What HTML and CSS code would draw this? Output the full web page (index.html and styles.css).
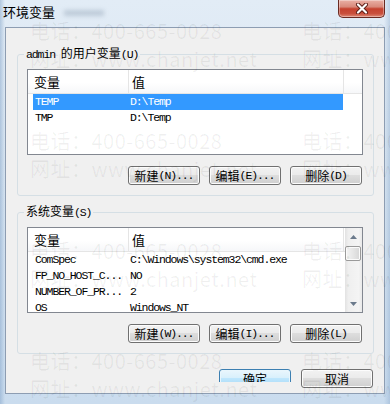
FILE: index.html
```html
<!DOCTYPE html>
<html lang="zh-CN">
<head>
<meta charset="utf-8">
<title>环境变量</title>
<link rel="stylesheet" href="styles.css">
</head>
<body>
<div class="window">
  <div class="titlebar">
    <div class="title-wrap">
      <span class="title">环境变量</span>
      <span class="ghost"></span>
    </div>
    <button class="close" type="button" aria-label="关闭">
      <svg width="14" height="11" viewBox="0 0 14 11">
        <path d="M3 1.5 L11 9.5 M11 1.5 L3 9.5" stroke="#5b1d16" stroke-width="4" stroke-linecap="round"/>
        <path d="M3 1.5 L11 9.5 M11 1.5 L3 9.5" stroke="#ffffff" stroke-width="2.2" stroke-linecap="round"/>
      </svg>
    </button>
  </div>

  <div class="client">
    <fieldset class="group user-group">
      <legend><span class="m">admin </span>的用户变量<span class="m">(U)</span></legend>
      <div class="listview">
        <div class="lv-header">
          <div class="hcol c1">变量</div>
          <div class="hcol c2">值</div>
          <div class="hcol c3"></div>
        </div>
        <div class="row sel"><span class="c1">TEMP</span><span class="c2">D:\Temp</span></div>
        <div class="row"><span class="c1">TMP</span><span class="c2">D:\Temp</span></div>
      </div>
      <div class="btnrow">
        <button class="btn" type="button">新建<span class="m">(N)...</span></button>
        <button class="btn" type="button">编辑<span class="m">(E)...</span></button>
        <button class="btn" type="button">删除<span class="m">(D)</span></button>
      </div>
    </fieldset>

    <fieldset class="group sys-group">
      <legend>系统变量<span class="m">(S)</span></legend>
      <div class="listview sys">
        <div class="lv-main">
          <div class="lv-header">
            <div class="hcol c1">变量</div>
            <div class="hcol c2">值</div>
            <div class="hcol c3"></div>
          </div>
          <div class="row"><span class="c1">ComSpec</span><span class="c2">C:\Windows\system32\cmd.exe</span></div>
          <div class="row"><span class="c1">FP_NO_HOST_C...</span><span class="c2">NO</span></div>
          <div class="row"><span class="c1">NUMBER_OF_PR...</span><span class="c2">2</span></div>
          <div class="row"><span class="c1">OS</span><span class="c2">Windows_NT</span></div>
        </div>
        <div class="vscroll">
          <div class="arrow up"><svg width="7" height="4" viewBox="0 0 7 4"><path d="M0 4 L3.5 0 L7 4 Z" fill="#6b7a8c"/></svg></div>
          <div class="track"><div class="thumb"></div></div>
          <div class="arrow down"><svg width="7" height="4" viewBox="0 0 7 4"><path d="M0 0 L7 0 L3.5 4 Z" fill="#6b7a8c"/></svg></div>
        </div>
      </div>
      <div class="btnrow">
        <button class="btn" type="button">新建<span class="m">(W)...</span></button>
        <button class="btn" type="button">编辑<span class="m">(I)...</span></button>
        <button class="btn" type="button">删除<span class="m">(L)</span></button>
      </div>
    </fieldset>

    <div class="dlg-buttons">
      <div class="ok-clip"><button class="btn default" type="button">确定</button></div>
      <button class="btn" type="button">取消</button>
    </div>
  </div>

  <div class="watermark" aria-hidden="true">
    <div class="wm"><div>电话：400-665-0028</div><div>网址：www.chanjet.net</div></div>
    <div class="wm"><div>电话：400-665-0028</div><div>网址：www.chanjet.net</div></div>
    <div class="wm"><div>电话：400-665-0028</div><div>网址：www.chanjet.net</div></div>
    <div class="wm"><div>电话：400-665-0028</div><div>网址：www.chanjet.net</div></div>
    <div class="wm"><div>电话：400-665-0028</div><div>网址：www.chanjet.net</div></div>
    <div class="wm"><div>电话：400-665-0028</div><div>网址：www.chanjet.net</div></div>
    <div class="wm"><div>电话：400-665-0028</div><div>网址：www.chanjet.net</div></div>
    <div class="wm"><div>电话：400-665-0028</div><div>网址：www.chanjet.net</div></div>
  </div>
</div>
</body>
</html>
```

FILE: styles.css
```css
* { box-sizing: border-box; }

html, body {
  margin: 0;
  padding: 0;
}

body {
  width: 390px;
  height: 404px;
  overflow: hidden;
  font-family: "Noto Sans CJK SC", "Noto Sans", sans-serif;
  color: #000;
}

.window {
  position: relative;
  width: 390px;
  height: 404px;
  overflow: hidden;
  display: flex;
  flex-direction: column;
  background:
    linear-gradient(90deg, rgba(120,155,195,0.45) 0, rgba(120,155,195,0) 5px, rgba(0,0,0,0) 384px, rgba(120,155,195,0.35) 390px),
    linear-gradient(180deg, #e2ecf6 0%, #d8e5f1 40%, #cadcee 100%);
}

/* title bar */
.titlebar {
  height: 27px;
  flex: none;
  display: flex;
  justify-content: space-between;
  align-items: flex-start;
}

.title-wrap {
  display: flex;
  align-items: center;
  padding: 4px 0 0 3px;
}

.title {
  font-size: 13px;
  line-height: 16px;
  color: #000;
}

.ghost {
  width: 40px;
  height: 6px;
  margin-left: 9px;
  margin-top: 1px;
  background: rgba(70, 90, 120, 0.22);
  filter: blur(2px);
}

.close {
  width: 47px;
  height: 18px;
  margin-right: 5px;
  padding: 0;
  border: 1px solid #6a2a22;
  border-top: none;
  border-radius: 0 0 5px 5px;
  background: linear-gradient(180deg, #eab0a6 0%, #d98a7c 40%, #c5412f 52%, #c9503d 80%, #de8a77 100%);
  box-shadow: inset 0 0 0 1px rgba(255,255,255,0.35);
  display: flex;
  align-items: center;
  justify-content: center;
}

/* client area */
.client {
  margin-left: 5px;
  width: 380px;
  height: 367px;
  flex: none;
  background: #f0f0f0;
  border: 1px solid #8d9db2;
  display: flex;
  flex-direction: column;
}

.group {
  width: 357px;
  margin: 18px 0 0 11px;
  padding: 7px 10px 10px 9px;
  border: 1px solid #d5dfe5;
  border-radius: 3px;
  min-width: 0;
}

.sys-group {
  margin-top: 8px;
}

.group legend {
  font-size: 12px;
  line-height: 14px;
  padding: 0 2px;
  margin-left: -3px;
  color: #000;
}

.m {
  font-family: "Liberation Mono", "DejaVu Sans Mono", monospace;
  font-size: 11.5px;
  letter-spacing: -1.1px;
}

/* list views */
.listview {
  width: 336px;
  height: 86px;
  border: 1px solid #828790;
  background: #fff;
  overflow: hidden;
}

.listview.sys {
  display: flex;
}

.lv-main {
  flex: 1;
  min-width: 0;
  overflow: hidden;
}

.lv-header {
  display: flex;
  height: 24px;
  border-bottom: 1px solid #e5e5e5;
  background: linear-gradient(180deg, #ffffff 0%, #ffffff 55%, #f6f7f9 100%);
}

.hcol {
  font-size: 13px;
  line-height: 23px;
  color: #000;
}

.hcol.c1 {
  width: 101px;
  padding-left: 6px;
  border-right: 1px solid #e5e5e5;
}

.hcol.c2 {
  width: 215px;
  padding-left: 3px;
  border-right: 1px solid #e5e5e5;
}

.hcol.c3 {
  flex: 1;
}

.row {
  display: flex;
  height: 16px;
  width: 310px;
  margin-left: 5px;
  font-family: "Liberation Mono", "DejaVu Sans Mono", monospace;
  font-size: 11.5px;
  line-height: 16px;
  letter-spacing: -1.1px;
  white-space: nowrap;
  color: #000;
}

.row .c1 {
  width: 97px;
  padding-left: 2px;
}

.row.sel {
  background: #3399ff;
  color: #ffffff;
}

/* scrollbar */
.vscroll {
  width: 17px;
  flex: none;
  display: flex;
  flex-direction: column;
  background: linear-gradient(90deg, #e2e2e2 0%, #efefef 20%, #f4f4f4 80%, #e9e9e9 100%);
}

.arrow {
  height: 17px;
  flex: none;
  display: flex;
  align-items: center;
  justify-content: center;
}

.track {
  flex: 1;
  padding: 1px 1px 0 0;
}

.thumb {
  height: 15px;
  border: 1px solid #9a9a9a;
  border-radius: 2px;
  background: linear-gradient(90deg, #f4f4f4 0%, #e6e6e6 50%, #d6d6d6 100%);
  box-shadow: inset 0 0 0 1px #fbfbfb;
}

/* buttons */
.btnrow {
  display: flex;
  justify-content: flex-end;
  gap: 9px;
  margin-top: 11px;
  padding-right: 1px;
}

.btn {
  width: 72px;
  height: 19px;
  padding: 0;
  border: 1px solid #707070;
  border-radius: 3px;
  background: linear-gradient(180deg, #f2f2f2 0%, #ebebeb 45%, #dddddd 50%, #cfcfcf 100%);
  box-shadow: inset 0 0 0 1px #fcfcfc;
  font-family: "Noto Sans CJK SC", sans-serif;
  font-size: 12px;
  line-height: 17px;
  color: #000;
  display: flex;
  align-items: center;
  justify-content: center;
  white-space: nowrap;
}

.dlg-buttons {
  display: flex;
  justify-content: flex-end;
  align-items: flex-start;
  gap: 10px;
  margin-top: 15px;
  padding-right: 11px;
}

.ok-clip {
  height: 13px;
  overflow: hidden;
}

.btn.default {
  border-color: #3c7fb1;
  background: linear-gradient(180deg, #eaf6fd 0%, #d9f0fc 45%, #bee6fd 50%, #a7d9f5 100%);
  box-shadow: inset 0 0 0 1px #e8f6fd;
}

/* watermark overlay */
.watermark {
  position: absolute;
  top: 0;
  left: 0;
  width: 620px;
  padding: 17px 0 0 30px;
  display: grid;
  grid-template-columns: 272px 272px;
  grid-auto-rows: 110px;
  pointer-events: none;
  color: rgba(0, 0, 0, 0.06);
  font-family: "Noto Sans CJK SC", sans-serif;
  font-size: 20px;
  line-height: 28px;
  letter-spacing: 0.5px;
  white-space: nowrap;
}
```
